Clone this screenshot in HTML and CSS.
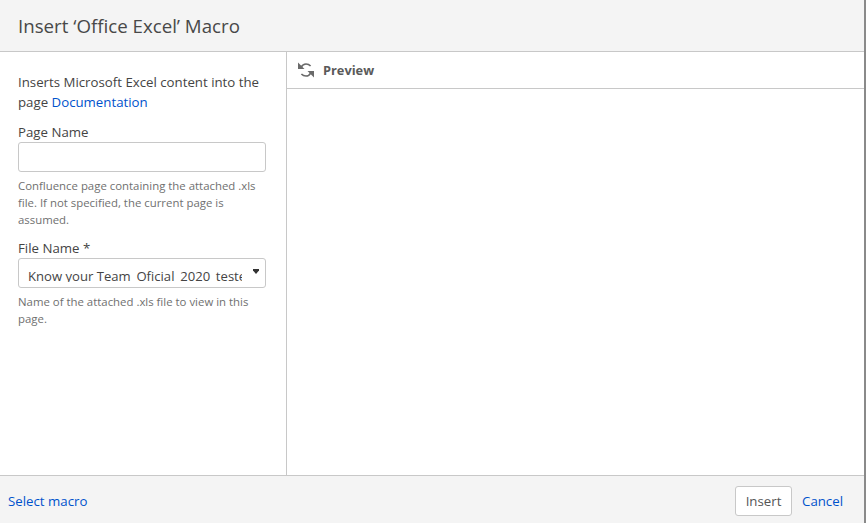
FILE: index.html
```html
<!DOCTYPE html>
<html lang="en">
<head>
<meta charset="utf-8">
<title>Insert Macro</title>
<link rel="stylesheet" href="styles.css">
</head>
<body>
<div class="dialog">
  <header class="head"><h1 class="title">Insert ‘Office Excel’ Macro</h1></header>
  <main class="body">
    <aside class="side">
      <p class="intro">Inserts Microsoft Excel content into the page <a class="link" href="#">Documentation</a></p>
      <label class="label">Page Name</label>
      <div class="input"></div>
      <p class="hint hint-first">Confluence page containing the attached .xls file. If not specified, the current page is assumed.</p>
      <label class="label label-file">File Name *</label>
      <div class="select">
        <span class="select-text">Know your Team_Oficial_2020_teste.xlsx</span>
        <svg class="select-arrow" width="6" height="5" viewBox="0 0 6 5"><path d="M0 0h6v1.5L3 5 0 1.5z" fill="#333"/></svg>
      </div>
      <p class="hint">Name of the attached .xls file to view in this page.</p>
    </aside>
    <section class="preview">
      <div class="preview-head">
        <svg class="refresh" width="16" height="16" viewBox="0 0 16 16" fill="none" stroke="#6a6a6a" stroke-width="1.6">
          <path d="M3.2 5.2C4.2 3.2 5.9 2 8 2c1.9 0 3.4.7 4.6 2"/>
          <path d="M12.8 10.8C11.8 12.8 10.1 14 8 14c-1.9 0-3.4-.7-4.6-2"/>
          <path d="M0 .5v6.5h6.5z" fill="#6a6a6a" stroke="none"/>
          <path d="M16 15.5V9H9.5z" fill="#6a6a6a" stroke="none"/>
        </svg>
        <span class="preview-title">Preview</span>
      </div>
    </section>
  </main>
  <footer class="foot">
    <a class="link" href="#">Select macro</a>
    <div class="actions">
      <button class="btn" type="button">Insert</button>
      <a class="link" href="#">Cancel</a>
    </div>
  </footer>
</div>
</body>
</html>
```
FILE: styles.css
```css
* { box-sizing: border-box; }
html, body { margin: 0; height: 100%; }
body {
  background: #fff;
  font-family: "Open Sans", "Noto Sans", sans-serif;
  font-size: 13.25px;
  color: #444;
  overflow: hidden;
}
.dialog {
  width: 866px;
  height: 523px;
  display: flex;
  flex-direction: column;
  border-right: 2px solid #8a8a8a;
}
.head {
  height: 52px;
  flex: none;
  background: #f4f4f4;
  border-bottom: 1px solid #c8c8c8;
  padding: 0 18px;
  display: flex;
  align-items: center;
}
.title {
  margin: 0;
  font-size: 18.7px;
  font-weight: 400;
  color: #484848;
}
.body { flex: 1; display: flex; min-height: 0; }
.side {
  width: 287px;
  flex: none;
  border-right: 1px solid #c8c8c8;
  padding: 20px 20px 0 18px;
}
.intro { margin: 0; line-height: 20px; }
.link { color: #0052cc; text-decoration: none; }
.label { display: block; margin-top: 10px; line-height: 20px; }
.input {
  height: 30px;
  width: 248px;
  background: #fff;
  border: 1px solid #c8c8c8;
  border-radius: 3px;
}
.hint {
  margin: 5px 0 0;
  font-size: 11.4px;
  line-height: 17px;
  color: #707070;
  width: 248px;
}
.label-file { margin-top: 10px; }
.select {
  position: relative;
  height: 30px;
  width: 248px;
  border: 1px solid #c8c8c8;
  border-radius: 3px;
  overflow: hidden;
  padding: 6px 0 0 9px;
}
.select-text {
  display: block;
  width: 214px;
  height: 17px;
  overflow: hidden;
  white-space: nowrap;
  font-size: 13.1px;
  line-height: 23px;
}
.select-arrow { position: absolute; top: 10px; right: 6px; }
.preview { flex: 1; min-width: 0; }
.preview-head {
  height: 37px;
  border-bottom: 1px solid #c8c8c8;
  display: flex;
  align-items: center;
  gap: 9px;
  padding: 0 0 0 11px;
}
.preview-title { font-weight: 700; font-size: 12.8px; color: #5a5a5a; }
.foot {
  height: 48px;
  flex: none;
  background: #f4f4f4;
  border-top: 1px solid #c8c8c8;
  padding: 3px 21px 0 8px;
  display: flex;
  align-items: center;
  justify-content: space-between;
}
.actions { display: flex; align-items: center; gap: 10px; }
.btn {
  width: 57px;
  height: 30px;
  padding: 0;
  background: #fff;
  border: 1px solid #c8c8c8;
  border-radius: 3px;
  font: inherit;
  color: #555;
}
```
